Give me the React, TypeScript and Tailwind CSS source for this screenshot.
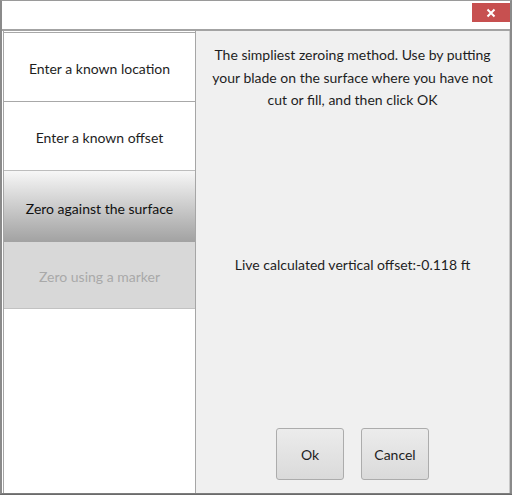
import React from 'react';

const font = { fontFamily: 'Lato, "Segoe UI", "Noto Sans", sans-serif' };

const options = [
  { label: 'Enter a known location', kind: 'plain', h: 'h-[69px]' },
  { label: 'Enter a known offset', kind: 'plain', h: 'h-[69px]' },
  { label: 'Zero against the surface', kind: 'active', h: 'h-[72px]' },
  { label: 'Zero using a marker', kind: 'disabled', h: 'h-[67px]' },
];

const OptionButton = ({ label, kind, h }: { label: string; kind: string; h: string }) => {
  let cls = 'bg-white text-[#1e1e1e] border-t border-[#a8a8a8]';
  if (kind === 'active') cls = 'bg-gradient-to-b from-[#f7f7f7] to-[#a2a2a2] text-[#111] border-t border-[#bdbdbd]';
  if (kind === 'disabled') cls = 'bg-[#d8d8d8] text-[#a9a9a9] border-b border-[#c2c2c2]';
  return (
    <div className={`${h} pt-[3px] flex items-center justify-center text-[14px] ${cls}`}>{label}</div>
  );
};

export default function App() {
  return (
    <div className="w-[512px] h-[495px] bg-[#6b6b6b] overflow-hidden" style={font}>
      <div className="w-[512px] h-[494px] flex flex-col bg-white border-l-2 border-r-2 border-b border-t border-t-[#9a9a9a] border-l-[#8a8a8a] border-r-[#8a8a8a] border-b-[#7d7d7d]">
        <div className="h-[28px] flex justify-end items-start bg-white">
          <div className="w-[38px] h-[19px] mt-[2px] bg-[#c75050] flex items-center justify-center">
            <svg width="10" height="10" viewBox="0 0 10 10">
              <path d="M1.5 1.5 L8.5 8.5 M8.5 1.5 L1.5 8.5" stroke="#fff" strokeWidth="2" />
            </svg>
          </div>
        </div>
        <div className="h-[2px] bg-[#a3a3a3]" />
        <div className="flex-1 flex">
          <div className="w-[193px] ml-[1px] bg-white border-l border-r border-[#a6a6a6] pt-[1px] flex flex-col">
            {options.map((o) => (
              <OptionButton key={o.label} label={o.label} kind={o.kind} h={o.h} />
            ))}
          </div>
          <div className="flex-1 bg-[#f0f0f0] border-r border-[#c8c8c8] flex flex-col items-center">
            <p className="mt-[13px] px-[14px] text-center text-[14px] leading-[22.5px] text-[#1e1e1e]">
              The simpliest zeroing method. Use by putting your blade on the surface where you have not cut or fill, and then click OK
            </p>
            <p className="mt-[142px] text-[14px] text-[#1e1e1e]">Live calculated vertical offset:-0.118 ft</p>
            <div className="mt-auto mb-[13px] flex gap-[17px]">
              <button className="w-[68px] h-[52px] rounded-[3px] border border-[#acacac] bg-gradient-to-b from-[#ececec] to-[#dadada] text-[14px] text-[#1e1e1e]">Ok</button>
              <button className="w-[68px] h-[52px] rounded-[3px] border border-[#acacac] bg-gradient-to-b from-[#ececec] to-[#dadada] text-[14px] text-[#1e1e1e]">Cancel</button>
            </div>
          </div>
        </div>
      </div>
    </div>
  );
}
